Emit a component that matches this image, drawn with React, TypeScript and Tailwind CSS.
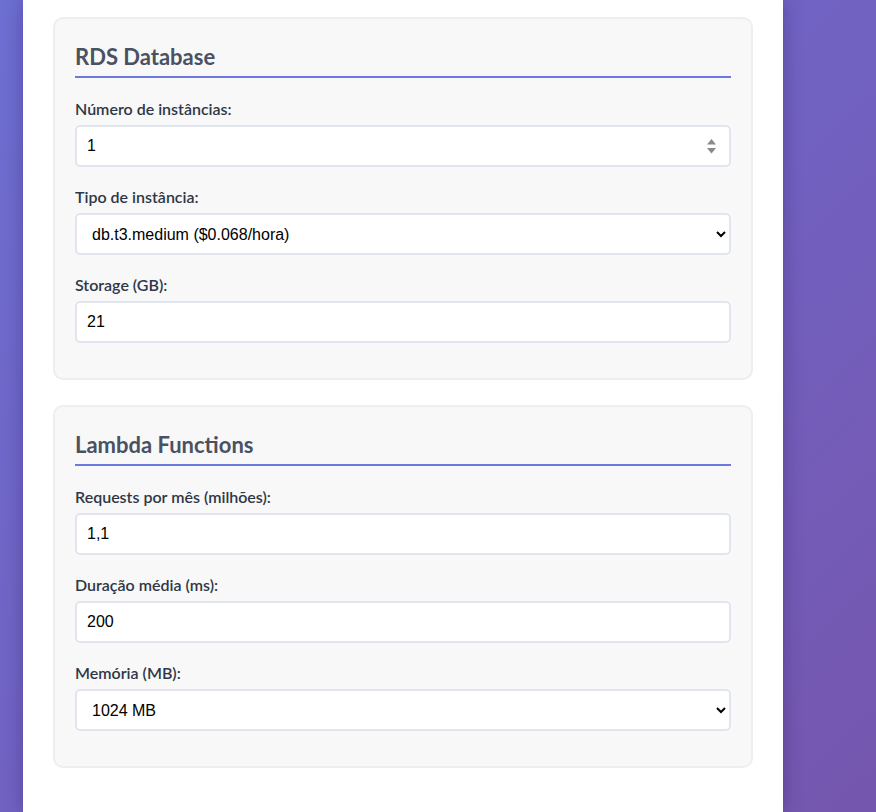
import { useState } from 'react';

type Field =
    | { kind: 'number'; label: string; value: string; spin?: boolean }
    | { kind: 'text'; label: string; value: string }
    | { kind: 'select'; label: string; value: string; options: string[] };

const sections: { title: string; fields: Field[] }[] = [
    {
        title: 'RDS Database',
        fields: [
            { kind: 'number', label: 'Número de instâncias:', value: '1', spin: true },
            {
                kind: 'select',
                label: 'Tipo de instância:',
                value: 'db.t3.medium ($0.068/hora)',
                options: ['db.t3.micro ($0.017/hora)', 'db.t3.small ($0.034/hora)', 'db.t3.medium ($0.068/hora)', 'db.t3.large ($0.136/hora)'],
            },
            { kind: 'text', label: 'Storage (GB):', value: '21' },
        ],
    },
    {
        title: 'Lambda Functions',
        fields: [
            { kind: 'text', label: 'Requests por mês (milhões):', value: '1,1' },
            { kind: 'text', label: 'Duração média (ms):', value: '200' },
            {
                kind: 'select',
                label: 'Memória (MB):',
                value: '1024 MB',
                options: ['128 MB', '256 MB', '512 MB', '1024 MB', '2048 MB'],
            },
        ],
    },
];

const inputCls =
    'block w-full h-[42px] rounded-[5px] border-2 border-[#e1e5ee] bg-white px-3 text-[16px] text-black outline-none font-["Liberation_Sans",Arial,sans-serif]';

function FormField({ field }: { field: Field }) {
    const [value, setValue] = useState(field.value);

    return (
        <div className="mb-[20px]">
            <label className="mb-[7px] block text-[16px] font-semibold leading-[19px] text-[#2f3747]">
                {field.label}
            </label>
            {field.kind === 'select' ? (
                <select value={value} onChange={(e) => setValue(e.target.value)} className={`${inputCls} pl-[11px]`}>
                    {field.options.map((o) => (
                        <option key={o}>{o}</option>
                    ))}
                </select>
            ) : (
                <div className="relative">
                    <input
                        type="text"
                        value={value}
                        onChange={(e) => setValue(e.target.value)}
                        className={`${inputCls} pl-[10px]`}
                    />
                    {/* fake spinner, number input arrows */}
                    {field.kind === 'number' && field.spin && (
                        <svg className="absolute right-[14px] top-1/2 -translate-y-1/2" width="11" height="18" viewBox="0 0 11 18">
                            <path d="M5.5 2 L10 7.5 H1 Z" fill="#8a8a8a" />
                            <path d="M1 11 H10 L5.5 16.5 Z" fill="#8a8a8a" />
                        </svg>
                    )}
                </div>
            )}
        </div>
    );
}

export default function App() {
    return (
        <div className="h-[812px] w-[876px] overflow-hidden bg-gradient-to-br from-[#6d6fd2] via-[#7162c2] to-[#7556ae] font-['Lato','Noto_Sans',sans-serif]">
            <div className="ml-[23px] h-full w-[760px] bg-white px-[30px] pt-[17px] shadow-[0_0_18px_rgba(40,20,90,0.35)]">
                {sections.map((s) => (
                    <div
                        key={s.title}
                        className="mb-[25px] rounded-[10px] border-2 border-[#eeeeef] bg-[#f8f8f8] px-[20px] pt-[24px] pb-[15px]"
                    >
                        <h3 className="mb-[21px] border-b-2 border-[#6c7ae0] pb-[5px] text-[22px] font-bold leading-[28px] text-[#4a5163]">
                            {s.title}
                        </h3>
                        {s.fields.map((f) => (
                            <FormField key={f.label} field={f} />
                        ))}
                    </div>
                ))}
            </div>
        </div>
    );
}
